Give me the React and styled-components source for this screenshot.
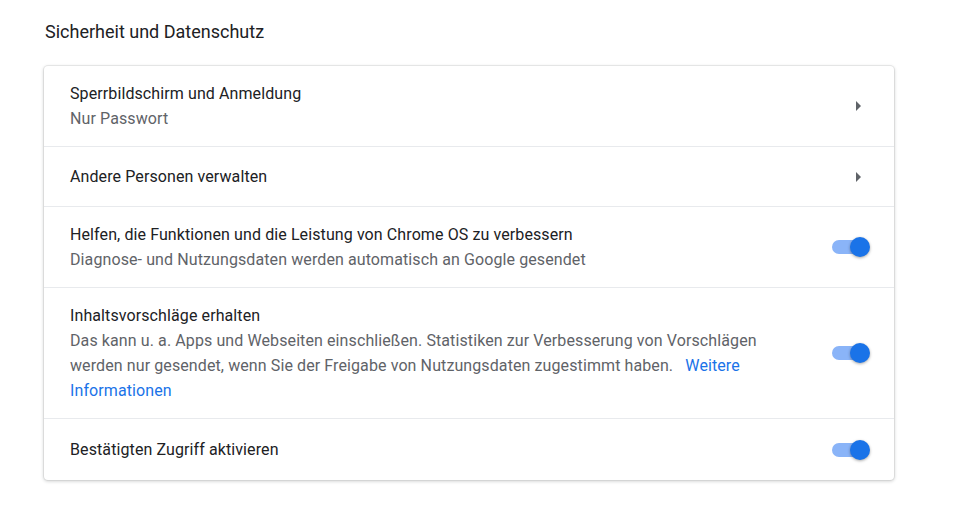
import React from 'react'
import styled, { createGlobalStyle } from 'styled-components'

const Global = createGlobalStyle`
  body {
    margin: 0;
    background: #ffffff;
    font-family: Roboto, "Noto Sans", sans-serif;
    color: #202124;
  }
`

const Page = styled.div`
  padding: 20px 62px 40px 44px;
`

const Heading = styled.h2`
  margin: 0 0 22px 1px;
  font-size: 18px;
  font-weight: 400;
  line-height: 24px;
  color: #202124;
`

const Card = styled.div`
  width: 850px;
  background: #fff;
  border-radius: 4px;
  box-shadow: 0 0 0 1px rgba(60, 64, 67, 0.08), 0 1px 3px 1px rgba(60, 64, 67, 0.18);
`

const Row = styled.div`
  display: flex;
  align-items: center;
  min-height: ${(p) => p.min || 60}px;
  padding: 15px 24px 15px 26px;
  box-sizing: border-box;
  border-top: ${(p) => (p.first ? 'none' : '1px solid #e8eaed')};
`

const Text = styled.div`
  flex: 1;
  padding-right: 40px;
  font-size: 16px;
  line-height: 25px;
  letter-spacing: 0.1px;
`

const Title = styled.div`
  color: #202124;
`

const Sub = styled.div`
  color: #5f6368;
`

const Link = styled.a`
  margin-left: 4px;
  color: #1a73e8;
  text-decoration: none;
`

const Arrow = styled.div`
  width: 0;
  height: 0;
  margin-right: 9px;
  border-top: 5px solid transparent;
  border-bottom: 5px solid transparent;
  border-left: 5px solid #5f6368;
`

const Toggle = styled.div`
  position: relative;
  width: 38px;
  height: 20px;
  flex-shrink: 0;
`

const Track = styled.div`
  position: absolute;
  left: 0;
  top: 3px;
  width: 34px;
  height: 14px;
  border-radius: 7px;
  background: #8ab4f8;
`

const Thumb = styled.div`
  position: absolute;
  right: 0;
  top: 0;
  width: 20px;
  height: 20px;
  border-radius: 50%;
  background: #1a73e8;
  box-shadow: 0 1px 3px rgba(0, 0, 0, 0.35);
`

const Switch = () => (
  <Toggle>
    <Track />
    <Thumb />
  </Toggle>
)

export default function App() {
  return (
    <Page>
      <Global />
      <Heading>Sicherheit und Datenschutz</Heading>
      <Card>
        <Row first>
          <Text>
            <Title>Sperrbildschirm und Anmeldung</Title>
            <Sub>Nur Passwort</Sub>
          </Text>
          <Arrow />
        </Row>
        <Row>
          <Text>
            <Title>Andere Personen verwalten</Title>
          </Text>
          <Arrow />
        </Row>
        <Row>
          <Text>
            <Title>Helfen, die Funktionen und die Leistung von Chrome OS zu verbessern</Title>
            <Sub>Diagnose- und Nutzungsdaten werden automatisch an Google gesendet</Sub>
          </Text>
          <Switch />
        </Row>
        <Row>
          <Text>
            <Title>Inhaltsvorschläge erhalten</Title>
            <Sub>
              Das kann u. a. Apps und Webseiten einschließen. Statistiken zur Verbesserung von Vorschlägen
              werden nur gesendet, wenn Sie der Freigabe von Nutzungsdaten zugestimmt haben.{'\u00a0 '}
              <Link href="#">Weitere Informationen</Link>
            </Sub>
          </Text>
          <Switch />
        </Row>
        <Row min={62}>
          <Text>
            <Title>Bestätigten Zugriff aktivieren</Title>
          </Text>
          <Switch />
        </Row>
      </Card>
    </Page>
  )
}
